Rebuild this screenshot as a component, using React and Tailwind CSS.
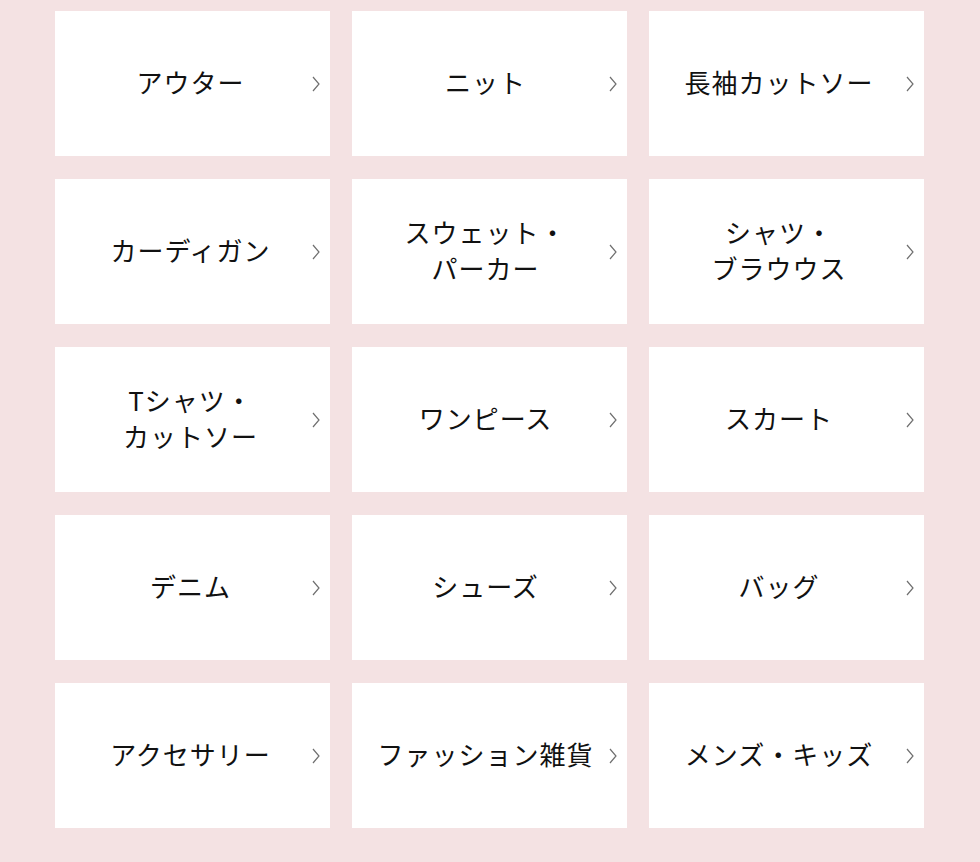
import React from "react";

const categories = [
  ["アウター"],
  ["ニット"],
  ["長袖カットソー"],
  ["カーディガン"],
  ["スウェット・", "パーカー"],
  ["シャツ・", "ブラウウス"],
  ["Tシャツ・", "カットソー"],
  ["ワンピース"],
  ["スカート"],
  ["デニム"],
  ["シューズ"],
  ["バッグ"],
  ["アクセサリー"],
  ["ファッション雑貨"],
  ["メンズ・キッズ"],
];

// text sits a little further left in each column
const colPadding = ["pl-[14px]", "pl-[10px]", "pl-[3px]"];

const Chevron = () => (
  <svg className="w-2 h-4 shrink-0" viewBox="0 0 8 16" fill="none">
    <polyline
      points="1,1 7,8 1,15"
      stroke="#6f6f6f"
      strokeWidth={1.2}
      strokeLinejoin="miter"
    />
  </svg>
);

const CategoryCard = ({ lines, col }) => (
  <a
    href="#"
    className={`flex items-center h-[145px] bg-white pr-[10px] ${colPadding[col]}`}
  >
    <span className="flex-1 text-center text-[26px] leading-[36px] font-normal tracking-[1px] text-[#111] -mt-[3px]">
      {lines.map((line, i) => (
        <React.Fragment key={i}>
          {i > 0 && <br />}
          {line}
        </React.Fragment>
      ))}
    </span>
    <Chevron />
  </a>
);

export default function App() {
  return (
    <div
      className="min-h-screen bg-[#f4e2e3] pt-[11px] pb-[34px] pl-[55px] pr-[56px]"
      style={{ fontFamily: '"Noto Sans CJK JP", "Noto Sans", sans-serif' }}
    >
      <div className="grid grid-cols-3 gap-x-[22px] gap-y-[23px]">
        {categories.map((lines, i) => (
          <CategoryCard key={i} lines={lines} col={i % 3} />
        ))}
      </div>
    </div>
  );
}
